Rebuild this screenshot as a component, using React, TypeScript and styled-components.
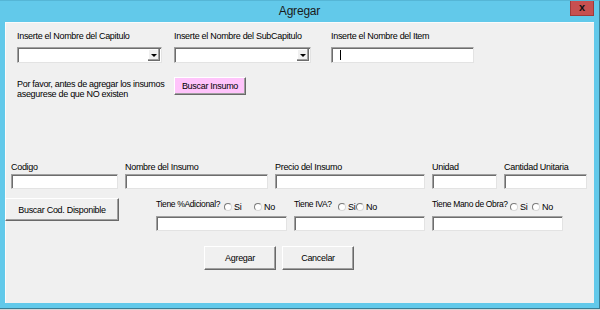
import styled, { createGlobalStyle } from "styled-components";

const GlobalStyle = createGlobalStyle`
  html, body {
    margin: 0;
    padding: 0;
    background: #d6d6d6;
  }
  body {
    font-family: "Liberation Sans", Arial, sans-serif;
  }
`;

const App = () => {
  return (
    <>
      <GlobalStyle />
      <Window>
        <TitleBar>
          <span />
          <TitleText>Agregar</TitleText>
          <CloseButton>x</CloseButton>
        </TitleBar>
        <Client>
          <TopGrid>
            <Field>
              <Label>Inserte el Nombre del Capitulo</Label>
              <ComboBox $w={145}>
                <ComboArrow>
                  <Triangle />
                </ComboArrow>
              </ComboBox>
            </Field>
            <Field>
              <Label>Inserte el Nombre del SubCapitulo</Label>
              <ComboBox $w={137}>
                <ComboArrow>
                  <Triangle />
                </ComboArrow>
              </ComboBox>
            </Field>
            <Field>
              <Label>Inserte el Nombre del Item</Label>
              <TextBox $w={143} $h={16}>
                <Caret />
              </TextBox>
            </Field>
            <InfoText>
              Por favor, antes de agregar los insumos
              <br />
              asegurese de que NO existen
            </InfoText>
            <Button $w={72} $h={18} $pink>
              Buscar Insumo
            </Button>
          </TopGrid>

          <DataRow>
            {[
              ["Codigo", 107],
              ["Nombre del Insumo", 143],
              ["Precio del Insumo", 150],
              ["Unidad", 65],
              ["Cantidad Unitaria", 83],
            ].map(([label, w]) => (
              <Field key={label as string}>
                <Label>{label}</Label>
                <TextBox $w={w as number} $h={15} />
              </Field>
            ))}
          </DataRow>

          <OptionRow>
            <Button $w={114} $h={23}>
              Buscar Cod. Disponible
            </Button>
            <Groups>
              <Group>
                <GroupHead>
                  <GroupLabel $w={68}>Tiene %Adicional?</GroupLabel>
                  <RadioOption $w={30}>
                    <RadioCircle />
                    Si
                  </RadioOption>
                  <RadioOption $w={24}>
                    <RadioCircle />
                    No
                  </RadioOption>
                </GroupHead>
                <TextBox $w={131} $h={15} />
              </Group>
              <Group>
                <GroupHead>
                  <GroupLabel $w={44}>Tiene IVA?</GroupLabel>
                  <RadioOption $w={18}>
                    <RadioCircle />
                    Si
                  </RadioOption>
                  <RadioOption $w={24}>
                    <RadioCircle />
                    No
                  </RadioOption>
                </GroupHead>
                <TextBox $w={131} $h={15} />
              </Group>
              <Group>
                <GroupHead>
                  <GroupLabel $w={78}>Tiene Mano de Obra?</GroupLabel>
                  <RadioOption $w={22}>
                    <RadioCircle />
                    Si
                  </RadioOption>
                  <RadioOption $w={24}>
                    <RadioCircle />
                    No
                  </RadioOption>
                </GroupHead>
                <TextBox $w={131} $h={15} />
              </Group>
            </Groups>
          </OptionRow>

          <FooterRow>
            <Button $w={72} $h={24}>
              Agregar
            </Button>
            <Button $w={72} $h={24}>
              Cancelar
            </Button>
          </FooterRow>
        </Client>
      </Window>
    </>
  );
};

export default App;

const Window = styled.div`
  width: 600px;
  height: 309px;
  box-sizing: border-box;
  background: #62c9ea;
  border-top: 1px solid #55b6d6;
  border-right: 1px solid #3a7d94;
  border-bottom: 1px solid #3a7d94;
  display: flex;
  flex-direction: column;
`;

const TitleBar = styled.div`
  height: 21px;
  display: grid;
  grid-template-columns: 1fr auto 1fr;
  align-items: start;
`;

const TitleText = styled.div`
  font-size: 12px;
  letter-spacing: -0.2px;
  line-height: 20px;
  color: #1a1a1a;
`;

const CloseButton = styled.div`
  justify-self: end;
  margin-right: 5px;
  width: 24px;
  height: 15px;
  background: #c75050;
  border: 1px solid #9e3a3a;
  border-top: none;
  box-sizing: border-box;
  color: #111;
  font-weight: bold;
  font-size: 11px;
  line-height: 12px;
  text-align: center;
`;

const Client = styled.div`
  flex: 1;
  margin: 0 5px 5px 5px;
  background: #f0f0f0;
  box-shadow: inset 1px 1px 0 #fbfbfb;
  display: flex;
  flex-direction: column;
  color: #000;
  font-size: 9px;
  letter-spacing: -0.3px;
`;

const TopGrid = styled.div`
  display: grid;
  grid-template-columns: 157px 157px 143px;
  row-gap: 14px;
  padding: 8px 0 0 12px;
`;

const Field = styled.div`
  display: flex;
  flex-direction: column;
  gap: 1px;

  ${TopGrid} & {
    gap: 5px;
  }
`;

const Label = styled.div`
  line-height: 12px;
  white-space: nowrap;
`;

const sunken = `
  box-sizing: border-box;
  background: #fff;
  border: 1px solid;
  border-color: #a0a0a0 #e3e3e3 #e3e3e3 #a0a0a0;
  box-shadow: inset 1px 1px 0 #6d6d6d;
`;

const TextBox = styled.div<{ $w: number; $h: number }>`
  ${sunken}
  width: ${(p) => p.$w}px;
  height: ${(p) => p.$h}px;
  display: flex;
  align-items: center;
  padding-left: 8px;
`;

const Caret = styled.span`
  width: 1px;
  height: 10px;
  background: #000;
`;

const ComboBox = styled.div<{ $w: number }>`
  ${sunken}
  width: ${(p) => p.$w}px;
  height: 16px;
  display: flex;
  justify-content: flex-end;
  padding: 1px 1px 1px 0;
`;

const ComboArrow = styled.div`
  width: 12px;
  box-sizing: border-box;
  background: #f0f0f0;
  border-right: 1px solid #6d6d6d;
  border-bottom: 1px solid #6d6d6d;
  box-shadow: inset -1px -1px 0 #a0a0a0, inset 1px 1px 0 #fff;
  display: flex;
  align-items: center;
  justify-content: center;
`;

const Triangle = styled.span`
  width: 0;
  height: 0;
  border-left: 3px solid transparent;
  border-right: 3px solid transparent;
  border-top: 3px solid #000;
  margin-top: 1px;
`;

const InfoText = styled.div`
  margin-top: 2px;
  line-height: 10px;
  white-space: nowrap;
`;

const Button = styled.div<{ $w: number; $h: number; $pink?: boolean }>`
  width: ${(p) => p.$w}px;
  height: ${(p) => p.$h}px;
  box-sizing: border-box;
  background: ${(p) => (p.$pink ? "#ffc4fb" : "#f0f0f0")};
  border: 1px solid;
  border-color: #fff #696969 #696969 #fff;
  box-shadow: inset -1px -1px 0 #a0a0a0;
  display: flex;
  align-items: center;
  justify-content: center;
  color: #000;
  white-space: nowrap;
`;

const DataRow = styled.div`
  display: flex;
  gap: 7px;
  margin-top: 62px;
  padding-left: 6px;
`;

const OptionRow = styled.div`
  display: flex;
  align-items: flex-start;
  margin-top: 9px;
`;

const Groups = styled.div`
  display: flex;
  gap: 7px;
  margin-left: 37px;
`;

const Group = styled.div`
  display: flex;
  flex-direction: column;
  width: 131px;
`;

const GroupHead = styled.div`
  height: 18px;
  display: flex;
  align-items: flex-start;
  white-space: nowrap;
`;

const GroupLabel = styled.div<{ $w: number }>`
  width: ${(p) => p.$w}px;
  flex-shrink: 0;
  font-size: 8.5px;
  letter-spacing: -0.35px;
  line-height: 12px;
`;

const RadioOption = styled.div<{ $w: number }>`
  width: ${(p) => p.$w}px;
  flex-shrink: 0;
  margin-top: 3px;
  display: flex;
  align-items: center;
  gap: 2px;
  line-height: 12px;
`;

const RadioCircle = styled.span`
  width: 8px;
  height: 8px;
  box-sizing: border-box;
  border-radius: 50%;
  background: #fff;
  border: 1px solid;
  border-color: #7a7a7a #d8d8d8 #d8d8d8 #7a7a7a;
  flex-shrink: 0;
`;

const FooterRow = styled.div`
  display: flex;
  gap: 6px;
  margin-top: 15px;
  padding-left: 199px;
`;
